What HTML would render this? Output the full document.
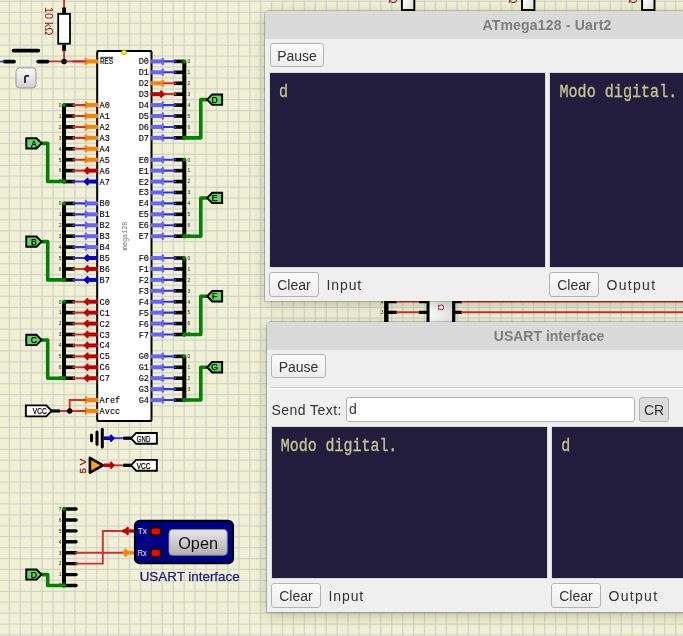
<!DOCTYPE html>
<html><head><meta charset="utf-8"><style>
*{box-sizing:border-box}
html,body{margin:0;padding:0}
body{width:683px;height:636px;overflow:hidden;position:relative;background:#f0f0d2;font-family:"Liberation Sans",sans-serif}
.win{will-change:transform;position:absolute;width:564px;height:290px;background:#efefef;border-radius:4px 4px 0 0;box-shadow:0 0 0 0.6px rgba(0,0,0,0.35),0 3px 14px rgba(40,40,0,0.26);overflow:hidden}
.title{position:absolute;left:0;top:0;right:0;height:27.5px;background:#d9d9d9;color:#7d7d7d;font-weight:bold;font-size:14px;text-align:center;line-height:28px;letter-spacing:0.2px}
.btn{position:absolute;height:24.4px;border:1px solid #b3b3b3;border-radius:3px;background:linear-gradient(#fbfbfb,#ececec);color:#333;font-size:14px;text-align:center;line-height:24px}
.lbl{position:absolute;color:#333;font-size:14px;line-height:16px;letter-spacing:0.9px}
.term{position:absolute;background:#231e3d;color:#c8c896;font-family:"Liberation Mono",monospace;font-size:15.1px;line-height:18px;overflow:hidden;will-change:transform;box-shadow:0 0 0 1px #dadada}
.term span{position:absolute;display:block;transform:scaleY(1.22);transform-origin:0 0;white-space:pre;-webkit-text-stroke:0.25px #c8c896}
.sep{position:absolute;left:4px;right:4px;height:2px;border-top:1px solid #c8c8c8;border-bottom:1px solid #fff}
.inp{position:absolute;background:#fff;border:1px solid #b0b0b0;border-radius:3px;color:#333;font-size:14px}
</style></head>
<body>
<svg width="683" height="636" viewBox="0 0 683 636" style="position:absolute;left:0;top:0;will-change:transform"><path d="M9.40 0V636 M20.32 0V636 M31.25 0V636 M42.17 0V636 M53.10 0V636 M64.02 0V636 M74.94 0V636 M85.87 0V636 M96.79 0V636 M107.72 0V636 M118.64 0V636 M129.56 0V636 M140.49 0V636 M151.41 0V636 M162.34 0V636 M173.26 0V636 M184.18 0V636 M195.11 0V636 M206.03 0V636 M216.96 0V636 M227.88 0V636 M238.80 0V636 M249.73 0V636 M260.65 0V636 M271.58 0V636 M282.50 0V636 M293.42 0V636 M304.35 0V636 M315.27 0V636 M326.20 0V636 M337.12 0V636 M348.04 0V636 M358.97 0V636 M369.89 0V636 M380.82 0V636 M391.74 0V636 M402.66 0V636 M413.59 0V636 M424.51 0V636 M435.44 0V636 M446.36 0V636 M457.28 0V636 M468.21 0V636 M479.13 0V636 M490.06 0V636 M500.98 0V636 M511.90 0V636 M522.83 0V636 M533.75 0V636 M544.68 0V636 M555.60 0V636 M566.52 0V636 M577.45 0V636 M588.37 0V636 M599.30 0V636 M610.22 0V636 M621.14 0V636 M632.07 0V636 M642.99 0V636 M653.92 0V636 M664.84 0V636 M675.76 0V636 M0 1.40H683 M0 12.32H683 M0 23.25H683 M0 34.17H683 M0 45.10H683 M0 56.02H683 M0 66.94H683 M0 77.87H683 M0 88.79H683 M0 99.72H683 M0 110.64H683 M0 121.56H683 M0 132.49H683 M0 143.41H683 M0 154.34H683 M0 165.26H683 M0 176.18H683 M0 187.11H683 M0 198.03H683 M0 208.96H683 M0 219.88H683 M0 230.80H683 M0 241.73H683 M0 252.65H683 M0 263.58H683 M0 274.50H683 M0 285.42H683 M0 296.35H683 M0 307.27H683 M0 318.20H683 M0 329.12H683 M0 340.04H683 M0 350.97H683 M0 361.89H683 M0 372.82H683 M0 383.74H683 M0 394.66H683 M0 405.59H683 M0 416.51H683 M0 427.44H683 M0 438.36H683 M0 449.28H683 M0 460.21H683 M0 471.13H683 M0 482.06H683 M0 492.98H683 M0 503.90H683 M0 514.83H683 M0 525.75H683 M0 536.68H683 M0 547.60H683 M0 558.52H683 M0 569.45H683 M0 580.37H683 M0 591.30H683 M0 602.22H683 M0 613.14H683 M0 624.07H683 M0 634.99H683" stroke="#d2d2d0" stroke-width="1.25" fill="none"/><rect x="97.20" y="51.1" width="54.30" height="369.90" rx="1.2" fill="#fff" stroke="#000" stroke-width="2"/><ellipse cx="124.1" cy="52.3" rx="2.5" ry="2.3" fill="#ffff00" stroke="#8a8a00" stroke-width="0.7"/><text transform="translate(127.4 250.2) rotate(-90)" font-family="Liberation Mono" font-size="6.8" fill="#6e6e60" textLength="28.6" lengthAdjust="spacingAndGlyphs">mega128</text><path d="M73.30 61.40H85.80" stroke="#cc3030" stroke-width="2.1" stroke-linecap="round"/><path d="M85.70 61.40H98.10" stroke="#ff8000" stroke-width="4.0"/><path d="M85.10 58.10L87.70 61.40L85.10 64.70" stroke="#ff8000" stroke-width="2.2" fill="none" stroke-linejoin="miter"/><text x="99.9" y="64.40" font-family="Liberation Mono" font-size="8.6" fill="#000" stroke="#000" stroke-width="0.12" textLength="13.4" lengthAdjust="spacingAndGlyphs">RES</text><path d="M100.2 57.3H113.3" stroke="#000" stroke-width="0.8"/><path d="M64.0 105.10V181.56" stroke="#000" stroke-width="4"/><path d="M64.00 105.10H74.90" stroke="#000" stroke-width="3.6"/><path d="M73.30 105.10H85.80" stroke="#cc3030" stroke-width="2.1" stroke-linecap="round"/><path d="M85.70 105.10H98.10" stroke="#ff8000" stroke-width="4.0"/><path d="M85.10 101.80L87.70 105.10L85.10 108.40" stroke="#ff8000" stroke-width="2.2" fill="none" stroke-linejoin="miter"/><text x="99.60" y="108.10" font-family="Liberation Mono" font-size="8.6" fill="#000" stroke="#000" stroke-width="0.12" text-anchor="start">A0</text><path d="M64.00 116.02H74.90" stroke="#000" stroke-width="3.6"/><path d="M73.30 116.02H85.80" stroke="#cc3030" stroke-width="2.1" stroke-linecap="round"/><path d="M85.70 116.02H98.10" stroke="#ff8000" stroke-width="4.0"/><path d="M85.10 112.72L87.70 116.02L85.10 119.32" stroke="#ff8000" stroke-width="2.2" fill="none" stroke-linejoin="miter"/><text x="99.60" y="119.02" font-family="Liberation Mono" font-size="8.6" fill="#000" stroke="#000" stroke-width="0.12" text-anchor="start">A1</text><path d="M64.00 126.94H74.90" stroke="#000" stroke-width="3.6"/><path d="M73.30 126.94H85.80" stroke="#cc3030" stroke-width="2.1" stroke-linecap="round"/><path d="M85.70 126.94H98.10" stroke="#ff8000" stroke-width="4.0"/><path d="M85.10 123.64L87.70 126.94L85.10 130.24" stroke="#ff8000" stroke-width="2.2" fill="none" stroke-linejoin="miter"/><text x="99.60" y="129.94" font-family="Liberation Mono" font-size="8.6" fill="#000" stroke="#000" stroke-width="0.12" text-anchor="start">A2</text><path d="M64.00 137.87H74.90" stroke="#000" stroke-width="3.6"/><path d="M73.30 137.87H85.80" stroke="#cc3030" stroke-width="2.1" stroke-linecap="round"/><path d="M85.70 137.87H98.10" stroke="#ff8000" stroke-width="4.0"/><path d="M85.10 134.57L87.70 137.87L85.10 141.17" stroke="#ff8000" stroke-width="2.2" fill="none" stroke-linejoin="miter"/><text x="99.60" y="140.87" font-family="Liberation Mono" font-size="8.6" fill="#000" stroke="#000" stroke-width="0.12" text-anchor="start">A3</text><path d="M64.00 148.79H74.90" stroke="#000" stroke-width="3.6"/><path d="M73.30 148.79H85.80" stroke="#cc3030" stroke-width="2.1" stroke-linecap="round"/><path d="M85.70 148.79H98.10" stroke="#ff8000" stroke-width="4.0"/><path d="M85.10 145.49L87.70 148.79L85.10 152.09" stroke="#ff8000" stroke-width="2.2" fill="none" stroke-linejoin="miter"/><text x="99.60" y="151.79" font-family="Liberation Mono" font-size="8.6" fill="#000" stroke="#000" stroke-width="0.12" text-anchor="start">A4</text><path d="M64.00 159.72H74.90" stroke="#000" stroke-width="3.6"/><path d="M73.30 159.72H85.80" stroke="#cc3030" stroke-width="2.1" stroke-linecap="round"/><path d="M85.70 159.72H98.10" stroke="#ff8000" stroke-width="4.0"/><path d="M85.10 156.42L87.70 159.72L85.10 163.02" stroke="#ff8000" stroke-width="2.2" fill="none" stroke-linejoin="miter"/><text x="99.60" y="162.72" font-family="Liberation Mono" font-size="8.6" fill="#000" stroke="#000" stroke-width="0.12" text-anchor="start">A5</text><path d="M64.00 170.64H74.90" stroke="#000" stroke-width="3.6"/><path d="M73.30 170.64H85.80" stroke="#cc3030" stroke-width="2.1" stroke-linecap="round"/><path d="M86.50 170.64H98.10" stroke="#c00000" stroke-width="4.0"/><path d="M88.30 167.34L84.90 170.64L88.30 173.94" stroke="#c00000" stroke-width="2.2" fill="none" stroke-linejoin="miter"/><text x="99.60" y="173.64" font-family="Liberation Mono" font-size="8.6" fill="#000" stroke="#000" stroke-width="0.12" text-anchor="start">A6</text><path d="M64.00 181.56H74.90" stroke="#000" stroke-width="3.6"/><path d="M73.30 181.56H85.80" stroke="#3232dc" stroke-width="2.1" stroke-linecap="round"/><path d="M86.50 181.56H98.10" stroke="#0000c8" stroke-width="4.0"/><path d="M88.30 178.26L84.90 181.56L88.30 184.86" stroke="#0000c8" stroke-width="2.2" fill="none" stroke-linejoin="miter"/><text x="99.60" y="184.56" font-family="Liberation Mono" font-size="8.6" fill="#000" stroke="#000" stroke-width="0.12" text-anchor="start">A7</text><text x="61.50" y="106.90" font-family="Liberation Sans" font-size="4.9" fill="#222" text-anchor="end">0</text><text x="61.50" y="117.82" font-family="Liberation Sans" font-size="4.9" fill="#222" text-anchor="end">1</text><text x="61.50" y="128.74" font-family="Liberation Sans" font-size="4.9" fill="#222" text-anchor="end">2</text><text x="61.50" y="139.67" font-family="Liberation Sans" font-size="4.9" fill="#222" text-anchor="end">3</text><text x="61.50" y="150.59" font-family="Liberation Sans" font-size="4.9" fill="#222" text-anchor="end">4</text><text x="61.50" y="161.52" font-family="Liberation Sans" font-size="4.9" fill="#222" text-anchor="end">5</text><text x="61.50" y="172.44" font-family="Liberation Sans" font-size="4.9" fill="#222" text-anchor="end">6</text><text x="61.50" y="183.36" font-family="Liberation Sans" font-size="4.9" fill="#222" text-anchor="end">7</text><path d="M64.0 181.56H47.7V143.33H42.4" stroke="#008200" stroke-width="3.6" fill="none" stroke-linejoin="round" stroke-linecap="round"/><circle cx="64.0" cy="105.10" r="2" fill="#008200"/><circle cx="64.0" cy="181.56" r="2.2" fill="#008200"/><polygon points="26.25 138.18 36.45 138.18 41.65 143.33 36.45 148.48 26.25 148.48" fill="#64d264" stroke="#000" stroke-width="1.9" stroke-linejoin="miter"/><text x="33.95" y="146.53" font-family="Liberation Sans" font-size="8.6" fill="#000" stroke="#000" stroke-width="0.25" text-anchor="middle">A</text><path d="M64.0 203.41V279.88" stroke="#000" stroke-width="4"/><path d="M64.00 203.41H74.90" stroke="#000" stroke-width="3.6"/><path d="M73.30 203.41H85.80" stroke="#3232dc" stroke-width="2.1" stroke-linecap="round"/><path d="M85.70 203.41H98.10" stroke="#6464ff" stroke-width="4.0"/><path d="M85.10 200.11L87.70 203.41L85.10 206.71" stroke="#6464ff" stroke-width="2.2" fill="none" stroke-linejoin="miter"/><text x="99.60" y="206.41" font-family="Liberation Mono" font-size="8.6" fill="#000" stroke="#000" stroke-width="0.12" text-anchor="start">B0</text><path d="M64.00 214.34H74.90" stroke="#000" stroke-width="3.6"/><path d="M73.30 214.34H85.80" stroke="#3232dc" stroke-width="2.1" stroke-linecap="round"/><path d="M85.70 214.34H98.10" stroke="#6464ff" stroke-width="4.0"/><path d="M85.10 211.04L87.70 214.34L85.10 217.64" stroke="#6464ff" stroke-width="2.2" fill="none" stroke-linejoin="miter"/><text x="99.60" y="217.34" font-family="Liberation Mono" font-size="8.6" fill="#000" stroke="#000" stroke-width="0.12" text-anchor="start">B1</text><path d="M64.00 225.26H74.90" stroke="#000" stroke-width="3.6"/><path d="M73.30 225.26H85.80" stroke="#3232dc" stroke-width="2.1" stroke-linecap="round"/><path d="M85.70 225.26H98.10" stroke="#6464ff" stroke-width="4.0"/><path d="M85.10 221.96L87.70 225.26L85.10 228.56" stroke="#6464ff" stroke-width="2.2" fill="none" stroke-linejoin="miter"/><text x="99.60" y="228.26" font-family="Liberation Mono" font-size="8.6" fill="#000" stroke="#000" stroke-width="0.12" text-anchor="start">B2</text><path d="M64.00 236.18H74.90" stroke="#000" stroke-width="3.6"/><path d="M73.30 236.18H85.80" stroke="#3232dc" stroke-width="2.1" stroke-linecap="round"/><path d="M85.70 236.18H98.10" stroke="#6464ff" stroke-width="4.0"/><path d="M85.10 232.88L87.70 236.18L85.10 239.48" stroke="#6464ff" stroke-width="2.2" fill="none" stroke-linejoin="miter"/><text x="99.60" y="239.18" font-family="Liberation Mono" font-size="8.6" fill="#000" stroke="#000" stroke-width="0.12" text-anchor="start">B3</text><path d="M64.00 247.11H74.90" stroke="#000" stroke-width="3.6"/><path d="M73.30 247.11H85.80" stroke="#3232dc" stroke-width="2.1" stroke-linecap="round"/><path d="M85.70 247.11H98.10" stroke="#6464ff" stroke-width="4.0"/><path d="M85.10 243.81L87.70 247.11L85.10 250.41" stroke="#6464ff" stroke-width="2.2" fill="none" stroke-linejoin="miter"/><text x="99.60" y="250.11" font-family="Liberation Mono" font-size="8.6" fill="#000" stroke="#000" stroke-width="0.12" text-anchor="start">B4</text><path d="M64.00 258.03H74.90" stroke="#000" stroke-width="3.6"/><path d="M73.30 258.03H85.80" stroke="#3232dc" stroke-width="2.1" stroke-linecap="round"/><path d="M86.50 258.03H98.10" stroke="#0000c8" stroke-width="4.0"/><path d="M88.30 254.73L84.90 258.03L88.30 261.33" stroke="#0000c8" stroke-width="2.2" fill="none" stroke-linejoin="miter"/><text x="99.60" y="261.03" font-family="Liberation Mono" font-size="8.6" fill="#000" stroke="#000" stroke-width="0.12" text-anchor="start">B5</text><path d="M64.00 268.96H74.90" stroke="#000" stroke-width="3.6"/><path d="M73.30 268.96H85.80" stroke="#cc3030" stroke-width="2.1" stroke-linecap="round"/><path d="M86.50 268.96H98.10" stroke="#c00000" stroke-width="4.0"/><path d="M88.30 265.66L84.90 268.96L88.30 272.26" stroke="#c00000" stroke-width="2.2" fill="none" stroke-linejoin="miter"/><text x="99.60" y="271.96" font-family="Liberation Mono" font-size="8.6" fill="#000" stroke="#000" stroke-width="0.12" text-anchor="start">B6</text><path d="M64.00 279.88H74.90" stroke="#000" stroke-width="3.6"/><path d="M73.30 279.88H85.80" stroke="#3232dc" stroke-width="2.1" stroke-linecap="round"/><path d="M86.50 279.88H98.10" stroke="#0000c8" stroke-width="4.0"/><path d="M88.30 276.58L84.90 279.88L88.30 283.18" stroke="#0000c8" stroke-width="2.2" fill="none" stroke-linejoin="miter"/><text x="99.60" y="282.88" font-family="Liberation Mono" font-size="8.6" fill="#000" stroke="#000" stroke-width="0.12" text-anchor="start">B7</text><text x="61.50" y="205.21" font-family="Liberation Sans" font-size="4.9" fill="#222" text-anchor="end">0</text><text x="61.50" y="216.14" font-family="Liberation Sans" font-size="4.9" fill="#222" text-anchor="end">1</text><text x="61.50" y="227.06" font-family="Liberation Sans" font-size="4.9" fill="#222" text-anchor="end">2</text><text x="61.50" y="237.98" font-family="Liberation Sans" font-size="4.9" fill="#222" text-anchor="end">3</text><text x="61.50" y="248.91" font-family="Liberation Sans" font-size="4.9" fill="#222" text-anchor="end">4</text><text x="61.50" y="259.83" font-family="Liberation Sans" font-size="4.9" fill="#222" text-anchor="end">5</text><text x="61.50" y="270.76" font-family="Liberation Sans" font-size="4.9" fill="#222" text-anchor="end">6</text><text x="61.50" y="281.68" font-family="Liberation Sans" font-size="4.9" fill="#222" text-anchor="end">7</text><path d="M64.0 279.88H47.7V241.65H42.4" stroke="#008200" stroke-width="3.6" fill="none" stroke-linejoin="round" stroke-linecap="round"/><circle cx="64.0" cy="203.41" r="2" fill="#008200"/><circle cx="64.0" cy="279.88" r="2.2" fill="#008200"/><polygon points="26.25 236.50 36.45 236.50 41.65 241.65 36.45 246.80 26.25 246.80" fill="#64d264" stroke="#000" stroke-width="1.9" stroke-linejoin="miter"/><text x="33.95" y="244.85" font-family="Liberation Sans" font-size="8.6" fill="#000" stroke="#000" stroke-width="0.25" text-anchor="middle">B</text><path d="M64.0 301.73V378.20" stroke="#000" stroke-width="4"/><path d="M64.00 301.73H74.90" stroke="#000" stroke-width="3.6"/><path d="M73.30 301.73H85.80" stroke="#cc3030" stroke-width="2.1" stroke-linecap="round"/><path d="M86.50 301.73H98.10" stroke="#c00000" stroke-width="4.0"/><path d="M88.30 298.43L84.90 301.73L88.30 305.03" stroke="#c00000" stroke-width="2.2" fill="none" stroke-linejoin="miter"/><text x="99.60" y="304.73" font-family="Liberation Mono" font-size="8.6" fill="#000" stroke="#000" stroke-width="0.12" text-anchor="start">C0</text><path d="M64.00 312.65H74.90" stroke="#000" stroke-width="3.6"/><path d="M73.30 312.65H85.80" stroke="#cc3030" stroke-width="2.1" stroke-linecap="round"/><path d="M86.50 312.65H98.10" stroke="#c00000" stroke-width="4.0"/><path d="M88.30 309.35L84.90 312.65L88.30 315.95" stroke="#c00000" stroke-width="2.2" fill="none" stroke-linejoin="miter"/><text x="99.60" y="315.65" font-family="Liberation Mono" font-size="8.6" fill="#000" stroke="#000" stroke-width="0.12" text-anchor="start">C1</text><path d="M64.00 323.58H74.90" stroke="#000" stroke-width="3.6"/><path d="M73.30 323.58H85.80" stroke="#cc3030" stroke-width="2.1" stroke-linecap="round"/><path d="M86.50 323.58H98.10" stroke="#c00000" stroke-width="4.0"/><path d="M88.30 320.28L84.90 323.58L88.30 326.88" stroke="#c00000" stroke-width="2.2" fill="none" stroke-linejoin="miter"/><text x="99.60" y="326.58" font-family="Liberation Mono" font-size="8.6" fill="#000" stroke="#000" stroke-width="0.12" text-anchor="start">C2</text><path d="M64.00 334.50H74.90" stroke="#000" stroke-width="3.6"/><path d="M73.30 334.50H85.80" stroke="#cc3030" stroke-width="2.1" stroke-linecap="round"/><path d="M86.50 334.50H98.10" stroke="#c00000" stroke-width="4.0"/><path d="M88.30 331.20L84.90 334.50L88.30 337.80" stroke="#c00000" stroke-width="2.2" fill="none" stroke-linejoin="miter"/><text x="99.60" y="337.50" font-family="Liberation Mono" font-size="8.6" fill="#000" stroke="#000" stroke-width="0.12" text-anchor="start">C3</text><path d="M64.00 345.42H74.90" stroke="#000" stroke-width="3.6"/><path d="M73.30 345.42H85.80" stroke="#cc3030" stroke-width="2.1" stroke-linecap="round"/><path d="M86.50 345.42H98.10" stroke="#c00000" stroke-width="4.0"/><path d="M88.30 342.12L84.90 345.42L88.30 348.72" stroke="#c00000" stroke-width="2.2" fill="none" stroke-linejoin="miter"/><text x="99.60" y="348.42" font-family="Liberation Mono" font-size="8.6" fill="#000" stroke="#000" stroke-width="0.12" text-anchor="start">C4</text><path d="M64.00 356.35H74.90" stroke="#000" stroke-width="3.6"/><path d="M73.30 356.35H85.80" stroke="#cc3030" stroke-width="2.1" stroke-linecap="round"/><path d="M86.50 356.35H98.10" stroke="#c00000" stroke-width="4.0"/><path d="M88.30 353.05L84.90 356.35L88.30 359.65" stroke="#c00000" stroke-width="2.2" fill="none" stroke-linejoin="miter"/><text x="99.60" y="359.35" font-family="Liberation Mono" font-size="8.6" fill="#000" stroke="#000" stroke-width="0.12" text-anchor="start">C5</text><path d="M64.00 367.27H74.90" stroke="#000" stroke-width="3.6"/><path d="M73.30 367.27H85.80" stroke="#cc3030" stroke-width="2.1" stroke-linecap="round"/><path d="M86.50 367.27H98.10" stroke="#c00000" stroke-width="4.0"/><path d="M88.30 363.97L84.90 367.27L88.30 370.57" stroke="#c00000" stroke-width="2.2" fill="none" stroke-linejoin="miter"/><text x="99.60" y="370.27" font-family="Liberation Mono" font-size="8.6" fill="#000" stroke="#000" stroke-width="0.12" text-anchor="start">C6</text><path d="M64.00 378.20H74.90" stroke="#000" stroke-width="3.6"/><path d="M73.30 378.20H85.80" stroke="#cc3030" stroke-width="2.1" stroke-linecap="round"/><path d="M86.50 378.20H98.10" stroke="#c00000" stroke-width="4.0"/><path d="M88.30 374.90L84.90 378.20L88.30 381.50" stroke="#c00000" stroke-width="2.2" fill="none" stroke-linejoin="miter"/><text x="99.60" y="381.20" font-family="Liberation Mono" font-size="8.6" fill="#000" stroke="#000" stroke-width="0.12" text-anchor="start">C7</text><text x="61.50" y="303.53" font-family="Liberation Sans" font-size="4.9" fill="#222" text-anchor="end">0</text><text x="61.50" y="314.45" font-family="Liberation Sans" font-size="4.9" fill="#222" text-anchor="end">1</text><text x="61.50" y="325.38" font-family="Liberation Sans" font-size="4.9" fill="#222" text-anchor="end">2</text><text x="61.50" y="336.30" font-family="Liberation Sans" font-size="4.9" fill="#222" text-anchor="end">3</text><text x="61.50" y="347.22" font-family="Liberation Sans" font-size="4.9" fill="#222" text-anchor="end">4</text><text x="61.50" y="358.15" font-family="Liberation Sans" font-size="4.9" fill="#222" text-anchor="end">5</text><text x="61.50" y="369.07" font-family="Liberation Sans" font-size="4.9" fill="#222" text-anchor="end">6</text><text x="61.50" y="380.00" font-family="Liberation Sans" font-size="4.9" fill="#222" text-anchor="end">7</text><path d="M64.0 378.20H47.7V339.96H42.4" stroke="#008200" stroke-width="3.6" fill="none" stroke-linejoin="round" stroke-linecap="round"/><circle cx="64.0" cy="301.73" r="2" fill="#008200"/><circle cx="64.0" cy="378.20" r="2.2" fill="#008200"/><polygon points="26.25 334.81 36.45 334.81 41.65 339.96 36.45 345.11 26.25 345.11" fill="#64d264" stroke="#000" stroke-width="1.9" stroke-linejoin="miter"/><text x="33.95" y="343.16" font-family="Liberation Sans" font-size="8.6" fill="#000" stroke="#000" stroke-width="0.25" text-anchor="middle">C</text><path d="M73.30 400.04H85.80" stroke="#cc3030" stroke-width="2.1" stroke-linecap="round"/><path d="M85.70 400.04H98.10" stroke="#ff8000" stroke-width="4.0"/><path d="M85.10 396.74L87.70 400.04L85.10 403.34" stroke="#ff8000" stroke-width="2.2" fill="none" stroke-linejoin="miter"/><path d="M73.30 410.97H85.80" stroke="#cc3030" stroke-width="2.1" stroke-linecap="round"/><path d="M85.70 410.97H98.10" stroke="#ff8000" stroke-width="4.0"/><path d="M85.10 407.67L87.70 410.97L85.10 414.27" stroke="#ff8000" stroke-width="2.2" fill="none" stroke-linejoin="miter"/><text x="99.60" y="403.04" font-family="Liberation Mono" font-size="8.6" fill="#000" stroke="#000" stroke-width="0.12" text-anchor="start">Aref</text><text x="99.60" y="413.97" font-family="Liberation Mono" font-size="8.6" fill="#000" stroke="#000" stroke-width="0.12" text-anchor="start">Avcc</text><path d="M59 410.97H86 M69.7 410.97V400.04H86" stroke="#cc3030" stroke-width="1.9" fill="none"/><path d="M51 410.97H59.8" stroke="#000" stroke-width="3.2"/><circle cx="69.7" cy="410.97" r="2.7" fill="#000"/><polygon points="25.85 405.35 46.35 405.35 51.55 410.85 46.35 416.35 25.85 416.35" fill="#fff" stroke="#000" stroke-width="1.9" stroke-linejoin="miter"/><text x="39.70" y="414.05" font-family="Liberation Sans" font-size="8.8" fill="#000" stroke="#000" stroke-width="0.25" text-anchor="middle" textLength="13.8" lengthAdjust="spacingAndGlyphs">VCC</text><path d="M184.3 61.40V137.87" stroke="#000" stroke-width="4"/><path d="M184.30 61.40H173.80" stroke="#000" stroke-width="3.6"/><path d="M175.40 61.40H162.90" stroke="#3232dc" stroke-width="2.1" stroke-linecap="round"/><path d="M163.00 61.40H150.60" stroke="#6464ff" stroke-width="4.0"/><path d="M163.60 58.10L161.00 61.40L163.60 64.70" stroke="#6464ff" stroke-width="2.2" fill="none" stroke-linejoin="miter"/><text x="149.00" y="64.40" font-family="Liberation Mono" font-size="8.6" fill="#000" stroke="#000" stroke-width="0.12" text-anchor="end">D0</text><path d="M184.30 72.32H173.80" stroke="#000" stroke-width="3.6"/><path d="M175.40 72.32H162.90" stroke="#3232dc" stroke-width="2.1" stroke-linecap="round"/><path d="M163.00 72.32H150.60" stroke="#6464ff" stroke-width="4.0"/><path d="M163.60 69.02L161.00 72.32L163.60 75.62" stroke="#6464ff" stroke-width="2.2" fill="none" stroke-linejoin="miter"/><text x="149.00" y="75.32" font-family="Liberation Mono" font-size="8.6" fill="#000" stroke="#000" stroke-width="0.12" text-anchor="end">D1</text><path d="M184.30 83.25H173.80" stroke="#000" stroke-width="3.6"/><path d="M175.40 83.25H162.90" stroke="#cc3030" stroke-width="2.1" stroke-linecap="round"/><path d="M163.00 83.25H150.60" stroke="#ff8000" stroke-width="4.0"/><path d="M163.60 79.95L161.00 83.25L163.60 86.55" stroke="#ff8000" stroke-width="2.2" fill="none" stroke-linejoin="miter"/><text x="149.00" y="86.25" font-family="Liberation Mono" font-size="8.6" fill="#000" stroke="#000" stroke-width="0.12" text-anchor="end">D2</text><path d="M184.30 94.17H173.80" stroke="#000" stroke-width="3.6"/><path d="M175.40 94.17H162.90" stroke="#cc3030" stroke-width="2.1" stroke-linecap="round"/><path d="M162.20 94.17H150.60" stroke="#c00000" stroke-width="4.0"/><path d="M160.40 90.87L163.80 94.17L160.40 97.47" stroke="#c00000" stroke-width="2.2" fill="none" stroke-linejoin="miter"/><text x="149.00" y="97.17" font-family="Liberation Mono" font-size="8.6" fill="#000" stroke="#000" stroke-width="0.12" text-anchor="end">D3</text><path d="M184.30 105.10H173.80" stroke="#000" stroke-width="3.6"/><path d="M175.40 105.10H162.90" stroke="#3232dc" stroke-width="2.1" stroke-linecap="round"/><path d="M163.00 105.10H150.60" stroke="#6464ff" stroke-width="4.0"/><path d="M163.60 101.80L161.00 105.10L163.60 108.40" stroke="#6464ff" stroke-width="2.2" fill="none" stroke-linejoin="miter"/><text x="149.00" y="108.10" font-family="Liberation Mono" font-size="8.6" fill="#000" stroke="#000" stroke-width="0.12" text-anchor="end">D4</text><path d="M184.30 116.02H173.80" stroke="#000" stroke-width="3.6"/><path d="M175.40 116.02H162.90" stroke="#3232dc" stroke-width="2.1" stroke-linecap="round"/><path d="M163.00 116.02H150.60" stroke="#6464ff" stroke-width="4.0"/><path d="M163.60 112.72L161.00 116.02L163.60 119.32" stroke="#6464ff" stroke-width="2.2" fill="none" stroke-linejoin="miter"/><text x="149.00" y="119.02" font-family="Liberation Mono" font-size="8.6" fill="#000" stroke="#000" stroke-width="0.12" text-anchor="end">D5</text><path d="M184.30 126.94H173.80" stroke="#000" stroke-width="3.6"/><path d="M175.40 126.94H162.90" stroke="#3232dc" stroke-width="2.1" stroke-linecap="round"/><path d="M163.00 126.94H150.60" stroke="#6464ff" stroke-width="4.0"/><path d="M163.60 123.64L161.00 126.94L163.60 130.24" stroke="#6464ff" stroke-width="2.2" fill="none" stroke-linejoin="miter"/><text x="149.00" y="129.94" font-family="Liberation Mono" font-size="8.6" fill="#000" stroke="#000" stroke-width="0.12" text-anchor="end">D6</text><path d="M184.30 137.87H173.80" stroke="#000" stroke-width="3.6"/><path d="M175.40 137.87H162.90" stroke="#3232dc" stroke-width="2.1" stroke-linecap="round"/><path d="M163.00 137.87H150.60" stroke="#6464ff" stroke-width="4.0"/><path d="M163.60 134.57L161.00 137.87L163.60 141.17" stroke="#6464ff" stroke-width="2.2" fill="none" stroke-linejoin="miter"/><text x="149.00" y="140.87" font-family="Liberation Mono" font-size="8.6" fill="#000" stroke="#000" stroke-width="0.12" text-anchor="end">D7</text><text x="187.50" y="63.20" font-family="Liberation Sans" font-size="4.9" fill="#222" text-anchor="start">0</text><text x="187.50" y="74.12" font-family="Liberation Sans" font-size="4.9" fill="#222" text-anchor="start">1</text><text x="187.50" y="85.05" font-family="Liberation Sans" font-size="4.9" fill="#222" text-anchor="start">2</text><text x="187.50" y="95.97" font-family="Liberation Sans" font-size="4.9" fill="#222" text-anchor="start">3</text><text x="187.50" y="106.90" font-family="Liberation Sans" font-size="4.9" fill="#222" text-anchor="start">4</text><text x="187.50" y="117.82" font-family="Liberation Sans" font-size="4.9" fill="#222" text-anchor="start">5</text><text x="187.50" y="128.74" font-family="Liberation Sans" font-size="4.9" fill="#222" text-anchor="start">6</text><text x="187.50" y="139.67" font-family="Liberation Sans" font-size="4.9" fill="#222" text-anchor="start">7</text><path d="M184.3 137.87H200.8V99.63H206.2" stroke="#008200" stroke-width="3.6" fill="none" stroke-linejoin="round" stroke-linecap="round"/><circle cx="184.3" cy="61.40" r="2" fill="#008200"/><circle cx="184.3" cy="137.87" r="2.2" fill="#008200"/><polygon points="207.05 99.63 212.25 94.43 222.15 94.43 222.15 104.83 212.25 104.83" fill="#64d264" stroke="#000" stroke-width="1.9" stroke-linejoin="miter"/><text x="214.60" y="102.83" font-family="Liberation Sans" font-size="8.6" fill="#000" stroke="#000" stroke-width="0.25" text-anchor="middle">D</text><path d="M184.3 159.72V236.18" stroke="#000" stroke-width="4"/><path d="M184.30 159.72H173.80" stroke="#000" stroke-width="3.6"/><path d="M175.40 159.72H162.90" stroke="#3232dc" stroke-width="2.1" stroke-linecap="round"/><path d="M163.00 159.72H150.60" stroke="#6464ff" stroke-width="4.0"/><path d="M163.60 156.42L161.00 159.72L163.60 163.02" stroke="#6464ff" stroke-width="2.2" fill="none" stroke-linejoin="miter"/><text x="149.00" y="162.72" font-family="Liberation Mono" font-size="8.6" fill="#000" stroke="#000" stroke-width="0.12" text-anchor="end">E0</text><path d="M184.30 170.64H173.80" stroke="#000" stroke-width="3.6"/><path d="M175.40 170.64H162.90" stroke="#3232dc" stroke-width="2.1" stroke-linecap="round"/><path d="M163.00 170.64H150.60" stroke="#6464ff" stroke-width="4.0"/><path d="M163.60 167.34L161.00 170.64L163.60 173.94" stroke="#6464ff" stroke-width="2.2" fill="none" stroke-linejoin="miter"/><text x="149.00" y="173.64" font-family="Liberation Mono" font-size="8.6" fill="#000" stroke="#000" stroke-width="0.12" text-anchor="end">E1</text><path d="M184.30 181.56H173.80" stroke="#000" stroke-width="3.6"/><path d="M175.40 181.56H162.90" stroke="#3232dc" stroke-width="2.1" stroke-linecap="round"/><path d="M163.00 181.56H150.60" stroke="#6464ff" stroke-width="4.0"/><path d="M163.60 178.26L161.00 181.56L163.60 184.86" stroke="#6464ff" stroke-width="2.2" fill="none" stroke-linejoin="miter"/><text x="149.00" y="184.56" font-family="Liberation Mono" font-size="8.6" fill="#000" stroke="#000" stroke-width="0.12" text-anchor="end">E2</text><path d="M184.30 192.49H173.80" stroke="#000" stroke-width="3.6"/><path d="M175.40 192.49H162.90" stroke="#3232dc" stroke-width="2.1" stroke-linecap="round"/><path d="M163.00 192.49H150.60" stroke="#6464ff" stroke-width="4.0"/><path d="M163.60 189.19L161.00 192.49L163.60 195.79" stroke="#6464ff" stroke-width="2.2" fill="none" stroke-linejoin="miter"/><text x="149.00" y="195.49" font-family="Liberation Mono" font-size="8.6" fill="#000" stroke="#000" stroke-width="0.12" text-anchor="end">E3</text><path d="M184.30 203.41H173.80" stroke="#000" stroke-width="3.6"/><path d="M175.40 203.41H162.90" stroke="#3232dc" stroke-width="2.1" stroke-linecap="round"/><path d="M163.00 203.41H150.60" stroke="#6464ff" stroke-width="4.0"/><path d="M163.60 200.11L161.00 203.41L163.60 206.71" stroke="#6464ff" stroke-width="2.2" fill="none" stroke-linejoin="miter"/><text x="149.00" y="206.41" font-family="Liberation Mono" font-size="8.6" fill="#000" stroke="#000" stroke-width="0.12" text-anchor="end">E4</text><path d="M184.30 214.34H173.80" stroke="#000" stroke-width="3.6"/><path d="M175.40 214.34H162.90" stroke="#3232dc" stroke-width="2.1" stroke-linecap="round"/><path d="M163.00 214.34H150.60" stroke="#6464ff" stroke-width="4.0"/><path d="M163.60 211.04L161.00 214.34L163.60 217.64" stroke="#6464ff" stroke-width="2.2" fill="none" stroke-linejoin="miter"/><text x="149.00" y="217.34" font-family="Liberation Mono" font-size="8.6" fill="#000" stroke="#000" stroke-width="0.12" text-anchor="end">E5</text><path d="M184.30 225.26H173.80" stroke="#000" stroke-width="3.6"/><path d="M175.40 225.26H162.90" stroke="#3232dc" stroke-width="2.1" stroke-linecap="round"/><path d="M163.00 225.26H150.60" stroke="#6464ff" stroke-width="4.0"/><path d="M163.60 221.96L161.00 225.26L163.60 228.56" stroke="#6464ff" stroke-width="2.2" fill="none" stroke-linejoin="miter"/><text x="149.00" y="228.26" font-family="Liberation Mono" font-size="8.6" fill="#000" stroke="#000" stroke-width="0.12" text-anchor="end">E6</text><path d="M184.30 236.18H173.80" stroke="#000" stroke-width="3.6"/><path d="M175.40 236.18H162.90" stroke="#3232dc" stroke-width="2.1" stroke-linecap="round"/><path d="M163.00 236.18H150.60" stroke="#6464ff" stroke-width="4.0"/><path d="M163.60 232.88L161.00 236.18L163.60 239.48" stroke="#6464ff" stroke-width="2.2" fill="none" stroke-linejoin="miter"/><text x="149.00" y="239.18" font-family="Liberation Mono" font-size="8.6" fill="#000" stroke="#000" stroke-width="0.12" text-anchor="end">E7</text><text x="187.50" y="161.52" font-family="Liberation Sans" font-size="4.9" fill="#222" text-anchor="start">0</text><text x="187.50" y="172.44" font-family="Liberation Sans" font-size="4.9" fill="#222" text-anchor="start">1</text><text x="187.50" y="183.36" font-family="Liberation Sans" font-size="4.9" fill="#222" text-anchor="start">2</text><text x="187.50" y="194.29" font-family="Liberation Sans" font-size="4.9" fill="#222" text-anchor="start">3</text><text x="187.50" y="205.21" font-family="Liberation Sans" font-size="4.9" fill="#222" text-anchor="start">4</text><text x="187.50" y="216.14" font-family="Liberation Sans" font-size="4.9" fill="#222" text-anchor="start">5</text><text x="187.50" y="227.06" font-family="Liberation Sans" font-size="4.9" fill="#222" text-anchor="start">6</text><text x="187.50" y="237.98" font-family="Liberation Sans" font-size="4.9" fill="#222" text-anchor="start">7</text><path d="M184.3 236.18H200.8V197.95H206.2" stroke="#008200" stroke-width="3.6" fill="none" stroke-linejoin="round" stroke-linecap="round"/><circle cx="184.3" cy="159.72" r="2" fill="#008200"/><circle cx="184.3" cy="236.18" r="2.2" fill="#008200"/><polygon points="207.05 197.95 212.25 192.75 222.15 192.75 222.15 203.15 212.25 203.15" fill="#64d264" stroke="#000" stroke-width="1.9" stroke-linejoin="miter"/><text x="214.60" y="201.15" font-family="Liberation Sans" font-size="8.6" fill="#000" stroke="#000" stroke-width="0.25" text-anchor="middle">E</text><path d="M184.3 258.03V334.50" stroke="#000" stroke-width="4"/><path d="M184.30 258.03H173.80" stroke="#000" stroke-width="3.6"/><path d="M175.40 258.03H162.90" stroke="#3232dc" stroke-width="2.1" stroke-linecap="round"/><path d="M163.00 258.03H150.60" stroke="#6464ff" stroke-width="4.0"/><path d="M163.60 254.73L161.00 258.03L163.60 261.33" stroke="#6464ff" stroke-width="2.2" fill="none" stroke-linejoin="miter"/><text x="149.00" y="261.03" font-family="Liberation Mono" font-size="8.6" fill="#000" stroke="#000" stroke-width="0.12" text-anchor="end">F0</text><path d="M184.30 268.96H173.80" stroke="#000" stroke-width="3.6"/><path d="M175.40 268.96H162.90" stroke="#3232dc" stroke-width="2.1" stroke-linecap="round"/><path d="M163.00 268.96H150.60" stroke="#6464ff" stroke-width="4.0"/><path d="M163.60 265.66L161.00 268.96L163.60 272.26" stroke="#6464ff" stroke-width="2.2" fill="none" stroke-linejoin="miter"/><text x="149.00" y="271.96" font-family="Liberation Mono" font-size="8.6" fill="#000" stroke="#000" stroke-width="0.12" text-anchor="end">F1</text><path d="M184.30 279.88H173.80" stroke="#000" stroke-width="3.6"/><path d="M175.40 279.88H162.90" stroke="#3232dc" stroke-width="2.1" stroke-linecap="round"/><path d="M163.00 279.88H150.60" stroke="#6464ff" stroke-width="4.0"/><path d="M163.60 276.58L161.00 279.88L163.60 283.18" stroke="#6464ff" stroke-width="2.2" fill="none" stroke-linejoin="miter"/><text x="149.00" y="282.88" font-family="Liberation Mono" font-size="8.6" fill="#000" stroke="#000" stroke-width="0.12" text-anchor="end">F2</text><path d="M184.30 290.80H173.80" stroke="#000" stroke-width="3.6"/><path d="M175.40 290.80H162.90" stroke="#3232dc" stroke-width="2.1" stroke-linecap="round"/><path d="M163.00 290.80H150.60" stroke="#6464ff" stroke-width="4.0"/><path d="M163.60 287.50L161.00 290.80L163.60 294.10" stroke="#6464ff" stroke-width="2.2" fill="none" stroke-linejoin="miter"/><text x="149.00" y="293.80" font-family="Liberation Mono" font-size="8.6" fill="#000" stroke="#000" stroke-width="0.12" text-anchor="end">F3</text><path d="M184.30 301.73H173.80" stroke="#000" stroke-width="3.6"/><path d="M175.40 301.73H162.90" stroke="#3232dc" stroke-width="2.1" stroke-linecap="round"/><path d="M163.00 301.73H150.60" stroke="#6464ff" stroke-width="4.0"/><path d="M163.60 298.43L161.00 301.73L163.60 305.03" stroke="#6464ff" stroke-width="2.2" fill="none" stroke-linejoin="miter"/><text x="149.00" y="304.73" font-family="Liberation Mono" font-size="8.6" fill="#000" stroke="#000" stroke-width="0.12" text-anchor="end">F4</text><path d="M184.30 312.65H173.80" stroke="#000" stroke-width="3.6"/><path d="M175.40 312.65H162.90" stroke="#3232dc" stroke-width="2.1" stroke-linecap="round"/><path d="M163.00 312.65H150.60" stroke="#6464ff" stroke-width="4.0"/><path d="M163.60 309.35L161.00 312.65L163.60 315.95" stroke="#6464ff" stroke-width="2.2" fill="none" stroke-linejoin="miter"/><text x="149.00" y="315.65" font-family="Liberation Mono" font-size="8.6" fill="#000" stroke="#000" stroke-width="0.12" text-anchor="end">F5</text><path d="M184.30 323.58H173.80" stroke="#000" stroke-width="3.6"/><path d="M175.40 323.58H162.90" stroke="#3232dc" stroke-width="2.1" stroke-linecap="round"/><path d="M163.00 323.58H150.60" stroke="#6464ff" stroke-width="4.0"/><path d="M163.60 320.28L161.00 323.58L163.60 326.88" stroke="#6464ff" stroke-width="2.2" fill="none" stroke-linejoin="miter"/><text x="149.00" y="326.58" font-family="Liberation Mono" font-size="8.6" fill="#000" stroke="#000" stroke-width="0.12" text-anchor="end">F6</text><path d="M184.30 334.50H173.80" stroke="#000" stroke-width="3.6"/><path d="M175.40 334.50H162.90" stroke="#3232dc" stroke-width="2.1" stroke-linecap="round"/><path d="M163.00 334.50H150.60" stroke="#6464ff" stroke-width="4.0"/><path d="M163.60 331.20L161.00 334.50L163.60 337.80" stroke="#6464ff" stroke-width="2.2" fill="none" stroke-linejoin="miter"/><text x="149.00" y="337.50" font-family="Liberation Mono" font-size="8.6" fill="#000" stroke="#000" stroke-width="0.12" text-anchor="end">F7</text><text x="187.50" y="259.83" font-family="Liberation Sans" font-size="4.9" fill="#222" text-anchor="start">0</text><text x="187.50" y="270.76" font-family="Liberation Sans" font-size="4.9" fill="#222" text-anchor="start">1</text><text x="187.50" y="281.68" font-family="Liberation Sans" font-size="4.9" fill="#222" text-anchor="start">2</text><text x="187.50" y="292.60" font-family="Liberation Sans" font-size="4.9" fill="#222" text-anchor="start">3</text><text x="187.50" y="303.53" font-family="Liberation Sans" font-size="4.9" fill="#222" text-anchor="start">4</text><text x="187.50" y="314.45" font-family="Liberation Sans" font-size="4.9" fill="#222" text-anchor="start">5</text><text x="187.50" y="325.38" font-family="Liberation Sans" font-size="4.9" fill="#222" text-anchor="start">6</text><text x="187.50" y="336.30" font-family="Liberation Sans" font-size="4.9" fill="#222" text-anchor="start">7</text><path d="M184.3 334.50H200.8V296.27H206.2" stroke="#008200" stroke-width="3.6" fill="none" stroke-linejoin="round" stroke-linecap="round"/><circle cx="184.3" cy="258.03" r="2" fill="#008200"/><circle cx="184.3" cy="334.50" r="2.2" fill="#008200"/><polygon points="207.05 296.27 212.25 291.07 222.15 291.07 222.15 301.47 212.25 301.47" fill="#64d264" stroke="#000" stroke-width="1.9" stroke-linejoin="miter"/><text x="214.60" y="299.47" font-family="Liberation Sans" font-size="8.6" fill="#000" stroke="#000" stroke-width="0.25" text-anchor="middle">F</text><path d="M184.3 356.35V400.04" stroke="#000" stroke-width="4"/><path d="M184.30 356.35H173.80" stroke="#000" stroke-width="3.6"/><path d="M175.40 356.35H162.90" stroke="#3232dc" stroke-width="2.1" stroke-linecap="round"/><path d="M163.00 356.35H150.60" stroke="#6464ff" stroke-width="4.0"/><path d="M163.60 353.05L161.00 356.35L163.60 359.65" stroke="#6464ff" stroke-width="2.2" fill="none" stroke-linejoin="miter"/><text x="149.00" y="359.35" font-family="Liberation Mono" font-size="8.6" fill="#000" stroke="#000" stroke-width="0.12" text-anchor="end">G0</text><path d="M184.30 367.27H173.80" stroke="#000" stroke-width="3.6"/><path d="M175.40 367.27H162.90" stroke="#3232dc" stroke-width="2.1" stroke-linecap="round"/><path d="M163.00 367.27H150.60" stroke="#6464ff" stroke-width="4.0"/><path d="M163.60 363.97L161.00 367.27L163.60 370.57" stroke="#6464ff" stroke-width="2.2" fill="none" stroke-linejoin="miter"/><text x="149.00" y="370.27" font-family="Liberation Mono" font-size="8.6" fill="#000" stroke="#000" stroke-width="0.12" text-anchor="end">G1</text><path d="M184.30 378.20H173.80" stroke="#000" stroke-width="3.6"/><path d="M175.40 378.20H162.90" stroke="#3232dc" stroke-width="2.1" stroke-linecap="round"/><path d="M163.00 378.20H150.60" stroke="#6464ff" stroke-width="4.0"/><path d="M163.60 374.90L161.00 378.20L163.60 381.50" stroke="#6464ff" stroke-width="2.2" fill="none" stroke-linejoin="miter"/><text x="149.00" y="381.20" font-family="Liberation Mono" font-size="8.6" fill="#000" stroke="#000" stroke-width="0.12" text-anchor="end">G2</text><path d="M184.30 389.12H173.80" stroke="#000" stroke-width="3.6"/><path d="M175.40 389.12H162.90" stroke="#3232dc" stroke-width="2.1" stroke-linecap="round"/><path d="M163.00 389.12H150.60" stroke="#6464ff" stroke-width="4.0"/><path d="M163.60 385.82L161.00 389.12L163.60 392.42" stroke="#6464ff" stroke-width="2.2" fill="none" stroke-linejoin="miter"/><text x="149.00" y="392.12" font-family="Liberation Mono" font-size="8.6" fill="#000" stroke="#000" stroke-width="0.12" text-anchor="end">G3</text><path d="M184.30 400.04H173.80" stroke="#000" stroke-width="3.6"/><path d="M175.40 400.04H162.90" stroke="#3232dc" stroke-width="2.1" stroke-linecap="round"/><path d="M163.00 400.04H150.60" stroke="#6464ff" stroke-width="4.0"/><path d="M163.60 396.74L161.00 400.04L163.60 403.34" stroke="#6464ff" stroke-width="2.2" fill="none" stroke-linejoin="miter"/><text x="149.00" y="403.04" font-family="Liberation Mono" font-size="8.6" fill="#000" stroke="#000" stroke-width="0.12" text-anchor="end">G4</text><text x="187.50" y="358.15" font-family="Liberation Sans" font-size="4.9" fill="#222" text-anchor="start">0</text><text x="187.50" y="369.07" font-family="Liberation Sans" font-size="4.9" fill="#222" text-anchor="start">1</text><text x="187.50" y="380.00" font-family="Liberation Sans" font-size="4.9" fill="#222" text-anchor="start">2</text><text x="187.50" y="390.92" font-family="Liberation Sans" font-size="4.9" fill="#222" text-anchor="start">3</text><text x="187.50" y="401.84" font-family="Liberation Sans" font-size="4.9" fill="#222" text-anchor="start">4</text><path d="M184.3 400.04H200.8V367.27H206.2" stroke="#008200" stroke-width="3.6" fill="none" stroke-linejoin="round" stroke-linecap="round"/><circle cx="184.3" cy="356.35" r="2" fill="#008200"/><circle cx="184.3" cy="400.04" r="2.2" fill="#008200"/><polygon points="207.05 367.27 212.25 362.07 222.15 362.07 222.15 372.47 212.25 372.47" fill="#64d264" stroke="#000" stroke-width="1.9" stroke-linejoin="miter"/><text x="214.60" y="370.47" font-family="Liberation Sans" font-size="8.6" fill="#000" stroke="#000" stroke-width="0.25" text-anchor="middle">G</text><path d="M64.1 0V8 M64.1 50.6V61.4 H85.5 M49 61.4H64" stroke="#cc3030" stroke-width="1.9" fill="none"/><path d="M64.1 7.5V13.5 M64.1 44.5V51" stroke="#000" stroke-width="3.8"/><rect x="58.2" y="13.9" width="11.8" height="29.8" fill="#fff" stroke="#000" stroke-width="1.8"/><circle cx="64.1" cy="61.5" r="2.8" fill="#000"/><text transform="translate(45.2 6.9) rotate(90)" font-family="Liberation Sans" font-size="10.8" fill="#8c1414">10 kΩ</text><path d="M13.6 50.6H38.3 M4.5 61.6H14 M38.2 61.6H47.5" stroke="#000" stroke-width="3.8" stroke-linecap="round"/><path d="M0 61.6H4.6" stroke="#3232dc" stroke-width="1.6"/><path d="M102.3 429.2V447.1 M97.0 432.1V444.2 M91.5 435.0V440.7" stroke="#000" stroke-width="3.0" stroke-linecap="round"/><path d="M112.5 438.2H124.5" stroke="#3232dc" stroke-width="1.9"/><path d="M123.3 438.2H131" stroke="#000" stroke-width="3.3"/><path d="M103.8 438.2H112" stroke="#0000c8" stroke-width="3.6"/><path d="M110.3 435.0L113.5 438.2L110.3 441.4" stroke="#0000c8" stroke-width="2.2" fill="none"/><polygon points="130.95 438.35 136.15 432.95 156.85 432.95 156.85 443.75 136.15 443.75" fill="#fff" stroke="#000" stroke-width="1.9" stroke-linejoin="miter"/><text x="143.60" y="441.55" font-family="Liberation Sans" font-size="8.8" fill="#000" stroke="#000" stroke-width="0.25" text-anchor="middle" textLength="13.5" lengthAdjust="spacingAndGlyphs">GND</text><polygon points="89.9,457.9 103.0,465.3 89.9,472.7" fill="#ffa500" stroke="#000" stroke-width="2.6" stroke-linejoin="round"/><path d="M112.5 465.3H124.5" stroke="#cc3030" stroke-width="1.9"/><path d="M123.3 465.3H131" stroke="#000" stroke-width="3.3"/><path d="M104 465.3H112" stroke="#c00000" stroke-width="3.6"/><path d="M110.3 462.1L113.5 465.3L110.3 468.5" stroke="#c00000" stroke-width="2.2" fill="none"/><polygon points="130.95 465.30 136.15 459.90 156.85 459.90 156.85 470.70 136.15 470.70" fill="#fff" stroke="#000" stroke-width="1.9" stroke-linejoin="miter"/><text x="143.60" y="468.50" font-family="Liberation Sans" font-size="8.8" fill="#000" stroke="#000" stroke-width="0.25" text-anchor="middle" textLength="13.8" lengthAdjust="spacingAndGlyphs">VCC</text><text transform="translate(85.6 473.5) rotate(-90)" font-family="Liberation Sans" font-size="9.8" fill="#8c1414" stroke="#8c1414" stroke-width="0.3">5 V</text><path d="M64 509.03V585.50" stroke="#000" stroke-width="4"/><path d="M64 585.50H76" stroke="#000" stroke-width="3.4" stroke-linecap="round"/><path d="M64 574.58H76" stroke="#000" stroke-width="3.4" stroke-linecap="round"/><path d="M64 563.65H76" stroke="#000" stroke-width="3.4" stroke-linecap="round"/><path d="M64 552.73H76" stroke="#000" stroke-width="3.4" stroke-linecap="round"/><path d="M64 541.80H76" stroke="#000" stroke-width="3.4" stroke-linecap="round"/><path d="M64 530.88H76" stroke="#000" stroke-width="3.4" stroke-linecap="round"/><path d="M64 519.96H76" stroke="#000" stroke-width="3.4" stroke-linecap="round"/><path d="M64 509.03H76" stroke="#000" stroke-width="3.4" stroke-linecap="round"/><text x="61.50" y="587.30" font-family="Liberation Sans" font-size="4.9" fill="#222" text-anchor="end">0</text><text x="61.50" y="576.38" font-family="Liberation Sans" font-size="4.9" fill="#222" text-anchor="end">1</text><text x="61.50" y="565.45" font-family="Liberation Sans" font-size="4.9" fill="#222" text-anchor="end">2</text><text x="61.50" y="554.53" font-family="Liberation Sans" font-size="4.9" fill="#222" text-anchor="end">3</text><text x="61.50" y="543.60" font-family="Liberation Sans" font-size="4.9" fill="#222" text-anchor="end">4</text><text x="61.50" y="532.68" font-family="Liberation Sans" font-size="4.9" fill="#222" text-anchor="end">5</text><text x="61.50" y="521.76" font-family="Liberation Sans" font-size="4.9" fill="#222" text-anchor="end">6</text><text x="61.50" y="510.83" font-family="Liberation Sans" font-size="4.9" fill="#222" text-anchor="end">7</text><path d="M64 585.50H47.7V574.58H42.4" stroke="#008200" stroke-width="3.6" fill="none" stroke-linejoin="round" stroke-linecap="round"/><circle cx="64" cy="509.03" r="2" fill="#008200"/><circle cx="64" cy="585.50" r="2.2" fill="#008200"/><polygon points="26.25 569.53 36.45 569.53 41.65 574.58 36.45 579.63 26.25 579.63" fill="#64d264" stroke="#000" stroke-width="1.9" stroke-linejoin="miter"/><text x="33.95" y="577.78" font-family="Liberation Sans" font-size="8.6" fill="#000" stroke="#000" stroke-width="0.25" text-anchor="middle">D</text><path d="M75 552.73H123 M75 563.65H102.8V531.0H123" stroke="#cc3030" stroke-width="1.9" fill="none"/><path d="M122.5 531.0H134.5" stroke="#c00000" stroke-width="3.4"/><path d="M128.5 527.4L124.5 531.0L128.5 534.6" stroke="#c00000" stroke-width="2.3" fill="none"/><path d="M122.5 552.8H134.5" stroke="#ff8000" stroke-width="3.4"/><path d="M124.5 549.1999999999999L128.5 552.8L124.5 556.4" stroke="#ff8000" stroke-width="2.3" fill="none"/><rect x="134.9" y="520.6" width="98.2" height="42.8" rx="5" fill="#000082" stroke="#000" stroke-width="1.9"/><text x="137.8" y="534.4" font-family="Liberation Sans" font-size="8.6" fill="#f4f4f4" textLength="8.9" lengthAdjust="spacingAndGlyphs">Tx</text><text x="137.8" y="556.2" font-family="Liberation Sans" font-size="8.6" fill="#f4f4f4" textLength="8.9" lengthAdjust="spacingAndGlyphs">Rx</text><rect x="150.6" y="527.5" width="10.2" height="7.7" rx="2.3" fill="#ff0000" stroke="#000" stroke-width="1.8"/><rect x="150.6" y="549.2" width="10.2" height="7.7" rx="2.3" fill="#ff0000" stroke="#000" stroke-width="1.8"/><defs><linearGradient id="gbtn" x1="0" y1="0" x2="0" y2="1"><stop offset="0" stop-color="#e6e6e6"/><stop offset="1" stop-color="#b0b0b0"/></linearGradient><linearGradient id="gres" x1="0" y1="0" x2="1" y2="0"><stop offset="0" stop-color="#ffffff"/><stop offset="1" stop-color="#e6e6e6"/></linearGradient><linearGradient id="gkey" x1="0" y1="0" x2="0" y2="1"><stop offset="0" stop-color="#fafafa"/><stop offset="1" stop-color="#cfcfcf"/></linearGradient></defs><rect x="169" y="529.6" width="58.2" height="25.6" rx="3.5" fill="url(#gbtn)" stroke="#8c8c8c" stroke-width="0.9"/><text x="198.1" y="549.0" font-family="Liberation Sans" font-size="16.3" fill="#111" text-anchor="middle">Open</text><text x="139.7" y="581" font-family="Liberation Sans" font-size="13.4" fill="#1a1a80" stroke="#1a1a80" stroke-width="0.25">USART interface</text><rect x="16" y="67.9" width="20" height="20" rx="3.5" fill="url(#gkey)" stroke="#9a9a9a" stroke-width="1"/><path d="M25.0 83.0V77.6Q25.0 75.8 26.9 75.8H28.9" stroke="#16162e" stroke-width="1.75" fill="none"/><rect x="401.90" y="-20" width="12.4" height="30.0" fill="url(#gres)" stroke="#000" stroke-width="1.9"/><text transform="translate(389.30 -24.8) rotate(90)" font-family="Liberation Sans" font-size="10.8" fill="#8c1414">10 kΩ</text><rect x="522.00" y="-20" width="12.4" height="30.0" fill="url(#gres)" stroke="#000" stroke-width="1.9"/><text transform="translate(509.20 -24.8) rotate(90)" font-family="Liberation Sans" font-size="10.8" fill="#8c1414">10 kΩ</text><rect x="642.10" y="-20" width="12.4" height="30.0" fill="url(#gres)" stroke="#000" stroke-width="1.9"/><text transform="translate(629.20 -24.8) rotate(90)" font-family="Liberation Sans" font-size="10.8" fill="#8c1414">10 kΩ</text><path d="M386.3 296V326" stroke="#000" stroke-width="4.4"/><path d="M386 301.6H397 M386 312.3H397" stroke="#000" stroke-width="3.2"/><path d="M396 301.6H420 M396 312.3H420" stroke="#cc3030" stroke-width="1.9"/><path d="M419 301.6H429 M419 312.3H429" stroke="#000" stroke-width="3.2"/><rect x="429.6" y="290" width="22.4" height="40" fill="url(#gres)"/><path d="M428 296V326" stroke="#000" stroke-width="3"/><path d="M453.7 296V326" stroke="#000" stroke-width="3.2"/><path d="M453 301.6H462 M453 312.3H462" stroke="#000" stroke-width="3.2"/><path d="M461 301.6H683 M461 312.3H683" stroke="#cc3030" stroke-width="1.9"/><text transform="translate(437.5 304) rotate(90)" font-family="Liberation Sans" font-size="9" fill="#8c1414">Ω</text><text x="383.5" y="304" font-family="Liberation Sans" font-size="5" fill="#444" text-anchor="end">4</text><text x="383.5" y="314" font-family="Liberation Sans" font-size="5" fill="#444" text-anchor="end">3</text></svg>

<div class="win" style="left:265px;top:11px">
 <div class="title">ATmega128 - Uart2</div>
 <div class="btn" style="left:5px;top:32px;width:54px">Pause</div>
 <div class="term" style="left:5px;top:61.9px;width:274.5px;height:194px"><span style="left:9px;top:8.1px">d</span></div>
 <div class="term" style="left:284.6px;top:61.9px;width:274.5px;height:194px"><span style="left:9.5px;top:8.1px">Modo digital.</span></div>
 <div class="btn" style="left:3.7px;top:260.7px;width:50.6px;height:25px">Clear</div>
 <div class="lbl" style="left:61.5px;top:266px">Input</div>
 <div class="btn" style="left:283.6px;top:260.7px;width:50.6px;height:25px">Clear</div>
 <div class="lbl" style="left:341.5px;top:266px;letter-spacing:1.3px">Output</div>
</div>


<div class="win" style="left:267px;top:322px">
 <div class="title" style="letter-spacing:0">USART interface</div>
 <div class="btn" style="left:4px;top:32px;width:55px">Pause</div>
 <div class="sep" style="top:64.5px"></div>
 <div class="lbl" style="left:4.5px;top:80px;letter-spacing:0.45px">Send Text:</div>
 <div class="inp" style="left:78.6px;top:75px;width:289.2px;height:25.2px"><span style="position:absolute;left:2.5px;top:3px">d</span></div>
 <div class="btn" style="left:371.8px;top:74.8px;width:30.4px;height:25.2px;background:#dcdcdc">CR</div>
 <div class="term" style="left:4.8px;top:104.8px;width:274.5px;height:151.2px"><span style="left:8.8px;top:8.2px;font-size:14.95px">Modo digital.</span></div>
 <div class="term" style="left:284.7px;top:104.8px;width:274.5px;height:151.2px"><span style="left:9.3px;top:8.2px">d</span></div>
 <div class="btn" style="left:3.7px;top:260.7px;width:50.6px;height:25px">Clear</div>
 <div class="lbl" style="left:61.5px;top:266px">Input</div>
 <div class="btn" style="left:283.6px;top:260.7px;width:50.6px;height:25px">Clear</div>
 <div class="lbl" style="left:341.5px;top:266px;letter-spacing:1.3px">Output</div>
</div>

</body></html>
